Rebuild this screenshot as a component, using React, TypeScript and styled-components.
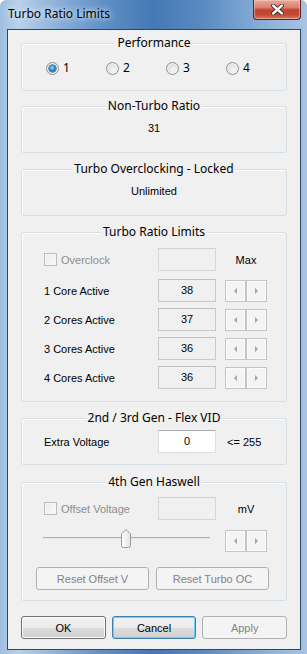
import styled, { createGlobalStyle } from "styled-components";

const uiFont = `"Noto Sans", "Open Sans", sans-serif`;

const GlobalStyle = createGlobalStyle`
  html, body {
    margin: 0;
    padding: 0;
  }
  body {
    font-family: "Liberation Sans", Arial, sans-serif;
    font-size: 11px;
    color: #000;
    background: #fff;
  }
`;

const ratioRows = [
  { label: "1 Core Active", value: "38", gap: 8 },
  { label: "2 Cores Active", value: "37", gap: 6 },
  { label: "3 Cores Active", value: "36", gap: 6 },
  { label: "4 Cores Active", value: "36", gap: 6 },
];

const Spin = () => (
  <SpinBox>
    <SpinHalf>
      <Arrow $dir="left" />
    </SpinHalf>
    <SpinHalf>
      <Arrow $dir="right" />
    </SpinHalf>
  </SpinBox>
);

export default function App() {
  return (
    <>
      <GlobalStyle />
      <Window>
        <TitleBar>
          <Caption>Turbo Ratio Limits</Caption>
          <CloseButton>
            <svg width="13" height="11" viewBox="0 0 13 11">
              <path d="M2.2 1.6 L10.8 9.4 M10.8 1.6 L2.2 9.4" stroke="#4a3430" strokeWidth="4.2" strokeLinecap="round" />
              <path d="M2.2 1.6 L10.8 9.4 M10.8 1.6 L2.2 9.4" stroke="#fff" strokeWidth="2.4" strokeLinecap="round" />
            </svg>
          </CloseButton>
        </TitleBar>

        <Client>
          <Group $height={48} $gap={0}>
            <GroupTitle>Performance</GroupTitle>
            <RadioRow>
              {["1", "2", "3", "4"].map((n) => (
                <RadioItem key={n}>
                  <Radio $checked={n === "1"} />
                  {n}
                </RadioItem>
              ))}
            </RadioRow>
          </Group>

          <Group $height={47} $gap={15}>
            <GroupTitle>Non-Turbo Ratio</GroupTitle>
            <CenterText>31</CenterText>
          </Group>

          <Group $height={47} $gap={16}>
            <GroupTitle>Turbo Overclocking - Locked</GroupTitle>
            <CenterText>Unlimited</CenterText>
          </Group>

          <Group $height={170} $gap={16}>
            <GroupTitle>Turbo Ratio Limits</GroupTitle>
            <FieldRow $gap={8}>
              <CheckLabel>
                <CheckBox />
                Overclock
              </CheckLabel>
              <TextBox $kind="disabled" />
              <SideText>Max</SideText>
            </FieldRow>
            {ratioRows.map((r, i) => (
              <FieldRow key={r.label} $gap={i === 0 ? 8 : 6}>
                <Label>{r.label}</Label>
                <TextBox $kind="readonly">{r.value}</TextBox>
                <Spin />
              </FieldRow>
            ))}
          </Group>

          <Group $height={47} $gap={16}>
            <GroupTitle>2nd / 3rd Gen - Flex VID</GroupTitle>
            <FieldRow $gap={4}>
              <Label>Extra Voltage</Label>
              <TextBox $kind="edit">0</TextBox>
              <SideText $left>&lt;= 255</SideText>
            </FieldRow>
          </Group>

          <Group $height={119} $gap={17}>
            <GroupTitle>4th Gen Haswell</GroupTitle>
            <FieldRow $gap={7}>
              <CheckLabel>
                <CheckBox />
                Offset Voltage
              </CheckLabel>
              <TextBox $kind="disabled" />
              <SideText>mV</SideText>
            </FieldRow>
            <FieldRow $gap={9}>
              <Slider>
                <Track />
                <Thumb style={{ left: 78 }}>
                  <svg width="10" height="19" viewBox="0 0 10 19">
                    <defs>
                      <linearGradient id="thumbFill" x1="0" y1="0" x2="1" y2="0">
                        <stop offset="0" stopColor="#ffffff" />
                        <stop offset="1" stopColor="#e4e4e4" />
                      </linearGradient>
                    </defs>
                    <path
                      d="M0.5 5 L5 0.5 L9.5 5 V16.5 Q9.5 18.5 7.5 18.5 H2.5 Q0.5 18.5 0.5 16.5 Z"
                      fill="url(#thumbFill)"
                      stroke="#9a9a9a"
                    />
                  </svg>
                </Thumb>
              </Slider>
              <Spin />
            </FieldRow>
            <ResetRow>
              <Button $variant="disabled" $width={113}>Reset Offset V</Button>
              <Button $variant="disabled" $width={113}>Reset Turbo OC</Button>
            </ResetRow>
          </Group>

          <ButtonRow>
            <Button $variant="normal" $width={85}>OK</Button>
            <Button $variant="default" $width={85}>Cancel</Button>
            <Button $variant="disabled" $width={85}>Apply</Button>
          </ButtonRow>
        </Client>
      </Window>
    </>
  );
}

const Window = styled.div`
  box-sizing: border-box;
  width: 307px;
  height: 654px;
  display: flex;
  flex-direction: column;
  padding: 0 6px 4px 7px;
  border-radius: 6px 6px 0 0;
  background: linear-gradient(
    90deg,
    #9fbfe0 0%,
    #b9d1ea 6%,
    #8fb2da 18%,
    #5f8fc5 34%,
    #4479b5 50%,
    #5a8ac1 66%,
    #86acd6 84%,
    #a7c4e4 100%
  );
`;

const TitleBar = styled.div`
  height: 29px;
  display: flex;
  justify-content: space-between;
  align-items: flex-start;
`;

const Caption = styled.span`
  margin: 6px 0 0 1px;
  font-family: ${uiFont};
  font-size: 12px;
  line-height: 16px;
  color: #000;
  text-shadow: 0 0 5px #e6f0fa, 0 0 9px rgba(230, 240, 250, 0.8);
`;

const CloseButton = styled.div`
  box-sizing: border-box;
  width: 48px;
  height: 20px;
  display: flex;
  align-items: center;
  justify-content: center;
  border: 1px solid #5b2420;
  border-top: none;
  border-radius: 0 0 4px 4px;
  background: linear-gradient(
    to bottom,
    #e9a99c 0%,
    #d9806f 40%,
    #c2432f 52%,
    #c24a36 78%,
    #d97a5e 100%
  );
  box-shadow: inset 0 0 0 1px rgba(255, 220, 210, 0.45);
`;

const Client = styled.div`
  flex: 1;
  display: flex;
  flex-direction: column;
  padding: 13px 13px 0;
  background: #f0f0f0;
  border: 1px solid #2c4664;
`;

const Group = styled.div<{ $height: number; $gap: number }>`
  box-sizing: border-box;
  height: ${({ $height }) => $height}px;
  margin-top: ${({ $gap }) => $gap}px;
  display: flex;
  flex-direction: column;
  border: 1px solid #d5dfe5;
  border-radius: 3px;
  box-shadow: inset 1px 1px 0 #fff;
`;

const GroupTitle = styled.div`
  align-self: center;
  margin-top: -9px;
  padding: 0 2px;
  background: #f0f0f0;
  font-family: ${uiFont};
  font-size: 12px;
  line-height: 16px;
  color: #000;
`;

const RadioRow = styled.div`
  display: flex;
  margin-top: 9px;
  padding-left: 24px;
  height: 16px;
`;

const RadioItem = styled.div`
  width: 60px;
  display: flex;
  align-items: center;
  gap: 4px;
  font-family: ${uiFont};
  font-size: 12px;
  line-height: 16px;
`;

const Radio = styled.span<{ $checked: boolean }>`
  position: relative;
  box-sizing: border-box;
  width: 13px;
  height: 13px;
  border-radius: 50%;
  border: 1px solid #8e8f8f;
  background: radial-gradient(circle at 60% 65%, #f8f8f8 0%, #e2e2e2 55%, #cfcfcf 100%);
  box-shadow: inset 0 0 0 1px #f4f4f4;

  &::after {
    content: "";
    display: ${({ $checked }) => ($checked ? "block" : "none")};
    position: absolute;
    left: 2px;
    top: 2px;
    width: 7px;
    height: 7px;
    border-radius: 50%;
    background: radial-gradient(circle at 45% 40%, #a9e3ff 0%, #2b95dc 40%, #0d4f8f 100%);
    box-shadow: 0 0 0 0.5px #1a4a7a;
  }
`;

const CenterText = styled.div`
  align-self: center;
  margin-top: 7px;
  line-height: 14px;
`;

const FieldRow = styled.div<{ $gap: number }>`
  display: grid;
  grid-template-columns: 105px 58px 42px;
  column-gap: 9px;
  align-items: center;
  height: 23px;
  margin-top: ${({ $gap }) => $gap}px;
  padding-left: 22px;
`;

const Label = styled.span`
  line-height: 14px;
  white-space: nowrap;
`;

const CheckLabel = styled.span`
  display: flex;
  align-items: center;
  gap: 4px;
  color: #8d8d8d;
  white-space: nowrap;
`;

const CheckBox = styled.span`
  box-sizing: border-box;
  width: 13px;
  height: 13px;
  border: 1px solid #bcbcbc;
  background: linear-gradient(135deg, #eaeaea, #fbfbfb);
  box-shadow: inset 0 0 0 1px #f6f6f6;
`;

const TextBox = styled.div<{ $kind: "disabled" | "readonly" | "edit" }>`
  box-sizing: border-box;
  height: 23px;
  display: flex;
  justify-content: center;
  padding-top: 3px;
  line-height: 14px;
  border: 1px solid
    ${({ $kind }) => ($kind === "edit" ? "#dbdfe6" : $kind === "readonly" ? "#c9c9c9" : "#d6d6d6")};
  border-top-color: ${({ $kind }) => ($kind === "edit" ? "#abadb3" : $kind === "readonly" ? "#bfbfbf" : "#d0d0d0")};
  background: ${({ $kind }) => ($kind === "edit" ? "#fff" : "#f0f0f0")};
  color: #000;
`;

const SideText = styled.span<{ $left?: boolean }>`
  justify-self: ${({ $left }) => ($left ? "start" : "center")};
  margin-left: ${({ $left }) => ($left ? "2px" : "0")};
  white-space: nowrap;
  line-height: 14px;
`;

const SpinBox = styled.div`
  display: flex;
  height: 22px;
`;

const SpinHalf = styled.div`
  box-sizing: border-box;
  width: 21px;
  height: 22px;
  display: flex;
  align-items: center;
  justify-content: center;
  border: 1px solid #c4c4c4;
  background: #f4f4f4;
  box-shadow: inset 0 0 0 1px #fbfbfb;
`;

const Arrow = styled.span<{ $dir: "left" | "right" }>`
  width: 0;
  height: 0;
  border-top: 3px solid transparent;
  border-bottom: 3px solid transparent;
  ${({ $dir }) =>
    $dir === "left" ? "border-right: 3px solid #a3a3a3;" : "border-left: 3px solid #a3a3a3;"}
`;

const Slider = styled.div`
  position: relative;
  grid-column: 1 / span 2;
  height: 23px;
  margin-left: -1px;
  width: 167px;
`;

const Track = styled.div`
  margin-top: 8px;
  height: 1px;
  background: #b0b0b0;
  border-bottom: 1px solid #e3e6e6;
`;

const Thumb = styled.div`
  position: absolute;
  top: 0;
  width: 10px;
  height: 19px;
  line-height: 0;
`;

const ResetRow = styled.div`
  display: flex;
  gap: 7px;
  margin-top: 15px;
  padding-left: 14px;
`;

const ButtonRow = styled.div`
  display: flex;
  gap: 6px;
  margin-top: 15px;
`;

const Button = styled.div<{ $variant: "normal" | "default" | "disabled"; $width: number }>`
  box-sizing: border-box;
  width: ${({ $width }) => $width}px;
  height: 23px;
  display: flex;
  align-items: center;
  justify-content: center;
  border-radius: 3px;
  font-size: 11px;
  border: 1px solid
    ${({ $variant }) =>
      $variant === "default" ? "#3c7fb1" : $variant === "disabled" ? "#adb2b5" : "#707070"};
  color: ${({ $variant }) => ($variant === "disabled" ? "#838383" : "#000")};
  background: ${({ $variant }) =>
    $variant === "disabled"
      ? "#f4f4f4"
      : "linear-gradient(to bottom, #f2f2f2 0%, #ebebeb 50%, #dddddd 51%, #cfcfcf 100%)"};
  box-shadow: ${({ $variant }) =>
    $variant === "default"
      ? "inset 0 0 0 1px #6fd0f7"
      : $variant === "disabled"
      ? "none"
      : "inset 0 0 0 1px #fcfcfc"};
`;
